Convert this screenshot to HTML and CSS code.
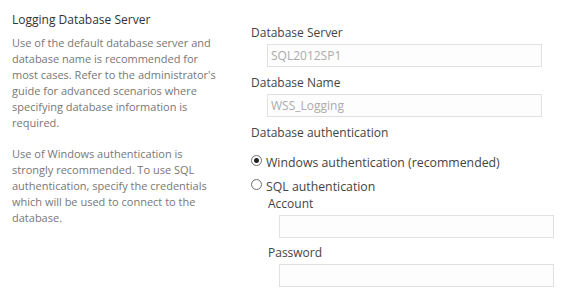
FILE: index.html
```html
<!DOCTYPE html>
<html lang="en">
<head>
    <meta charset="UTF-8">
    <title>Logging Database Server</title>
    <link rel="stylesheet" href="styles.css">
</head>
<body>
    <div class="section">
        <div class="info">
            <h3 class="title">Logging Database Server</h3>
            <p class="desc">Use of the default database server and<br>database name is recommended for<br>most cases. Refer to the administrator's<br>guide for advanced scenarios where<br>specifying database information is<br>required.</p>
            <p class="desc">Use of Windows authentication is<br>strongly recommended. To use SQL<br>authentication, specify the credentials<br>which will be used to connect to the<br>database.</p>
        </div>
        <div class="fields">
            <div class="label">Database Server</div>
            <input class="box" type="text" value="SQL2012SP1" readonly>
            <div class="label">Database Name</div>
            <input class="box" type="text" value="WSS_Logging" readonly>
            <div class="label auth">Database authentication</div>
            <div class="radio-row">
                <span class="radio checked"></span>
                <span>Windows authentication (recommended)</span>
            </div>
            <div class="radio-row">
                <span class="radio"></span>
                <span>SQL authentication</span>
            </div>
            <div class="creds">
                <div class="label">Account</div>
                <input class="box" type="text">
                <div class="label pw">Password</div>
                <input class="box" type="password">
            </div>
        </div>
    </div>
</body>
</html>
```

FILE: styles.css
```css
*{
    margin: 0;
    padding: 0;
    box-sizing: border-box;
}
body{
    background: #fff;
    font-family: "Open Sans", "Noto Sans", sans-serif;
    color: #444;
}
.section{
    display: flex;
    padding: 12px 0 0 12px;
}
.info{
    width: 239px;
    flex-shrink: 0;
}
.title{
    font-size: 12px;
    font-weight: normal;
    line-height: 16px;
    color: #333;
    margin-bottom: 7px;
}
.desc{
    font-size: 11px;
    line-height: 16px;
    color: #777;
    margin-bottom: 15px;
}
.fields{
    padding-top: 13px;
    display: flex;
    flex-direction: column;
}
.label{
    font-size: 12px;
    line-height: 16px;
    color: #444;
}
.box{
    display: block;
    width: 275px;
    height: 23px;
    margin: 3px 0 8px 16px;
    border: 1px solid #e1e1e1;
    background: #fdfdfd;
    padding: 0 3px;
    font-family: inherit;
    font-size: 12px;
    color: #ababab;
    outline: none;
}
.auth{
    margin-bottom: 10px;
}
.radio-row{
    display: flex;
    gap: 4px;
    font-size: 12.3px;
    line-height: 24px;
    color: #444;
}
.radio{
    width: 11px;
    height: 11px;
    margin-top: 4px;
    border: 1px solid #6f6f6f;
    border-radius: 50%;
    display: flex;
    align-items: center;
    justify-content: center;
}
.radio.checked::after{
    content: "";
    width: 5px;
    height: 5px;
    border-radius: 50%;
    background: #222;
}
.creds{
    margin-top: -3px;
    margin-left: 17px;
}
.creds .box{
    margin-left: 11px;
    margin-bottom: 7px;
}
.pw{
    margin-bottom: 2px;
}
```
